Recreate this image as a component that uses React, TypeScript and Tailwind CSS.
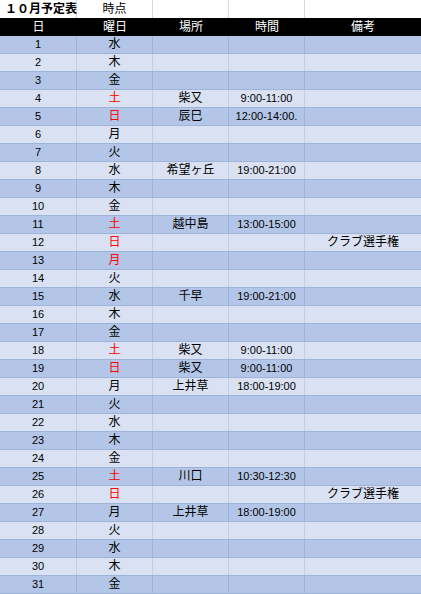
type Row = {
  day: number
  dow: string
  place?: string
  time?: string
  note?: string
  holiday?: boolean
}

const rows: Row[] = [
  {day: 1, dow: '水'},
  {day: 2, dow: '木'},
  {day: 3, dow: '金'},
  {day: 4, dow: '土', place: '柴又', time: '9:00-11:00'},
  {day: 5, dow: '日', place: '辰巳', time: '12:00-14:00.'},
  {day: 6, dow: '月'},
  {day: 7, dow: '火'},
  {day: 8, dow: '水', place: '希望ヶ丘', time: '19:00-21:00'},
  {day: 9, dow: '木'},
  {day: 10, dow: '金'},
  {day: 11, dow: '土', place: '越中島', time: '13:00-15:00'},
  {day: 12, dow: '日', note: 'クラブ選手権'},
  {day: 13, dow: '月', holiday: true},
  {day: 14, dow: '火'},
  {day: 15, dow: '水', place: '千早', time: '19:00-21:00'},
  {day: 16, dow: '木'},
  {day: 17, dow: '金'},
  {day: 18, dow: '土', place: '柴又', time: '9:00-11:00'},
  {day: 19, dow: '日', place: '柴又', time: '9:00-11:00'},
  {day: 20, dow: '月', place: '上井草', time: '18:00-19:00'},
  {day: 21, dow: '火'},
  {day: 22, dow: '水'},
  {day: 23, dow: '木'},
  {day: 24, dow: '金'},
  {day: 25, dow: '土', place: '川口', time: '10:30-12:30'},
  {day: 26, dow: '日', note: 'クラブ選手権'},
  {day: 27, dow: '月', place: '上井草', time: '18:00-19:00'},
  {day: 28, dow: '火'},
  {day: 29, dow: '水'},
  {day: 30, dow: '木'},
  {day: 31, dow: '金'},
]

const grid = 'grid grid-cols-[77px_76px_76px_76px_1fr] h-[18px]'
const font = {fontFamily: '"Liberation Sans", "Noto Sans CJK JP", sans-serif'}

export default function App() {
  return (
    <div className="w-[421px] h-[594px] overflow-hidden bg-white text-black" style={font}>
      <div className={`${grid} bg-white`}>
        <div className="border-r border-[#d9d9d9] pl-[5px] text-[12px] font-bold leading-[18px] whitespace-nowrap">
          １０月予定表
        </div>
        <div className="border-r border-[#d9d9d9] text-center text-[12px] leading-[18px]">時点</div>
        <div className="border-r border-[#d9d9d9]" />
        <div className="border-r border-[#d9d9d9]" />
        <div />
      </div>
      <div className={`${grid} bg-black text-white text-[12px] leading-[18px] text-center`}>
        <div>日</div>
        <div>曜日</div>
        <div>場所</div>
        <div>時間</div>
        <div>備考</div>
      </div>
      {rows.map((r) => {
        const dark = r.day % 2 === 1
        const line = dark ? 'border-[#9fb2d8]' : 'border-[#c3cce0]'
        const red = r.dow === '土' || r.dow === '日' || r.holiday
        return (
          <div
            key={r.day}
            className={`${grid} border-b border-[#9fb2d8] leading-[17px] text-center ${
              dark ? 'bg-[#b4c6e7]' : 'bg-[#d9e1f2]'
            }`}
          >
            <div className={`border-r ${line} text-[11px]`}>{r.day}</div>
            <div className={`border-r ${line} text-[12px] ${red ? 'text-[#ff0000]' : ''}`}>{r.dow}</div>
            <div className={`border-r ${line} text-[12px]`}>{r.place}</div>
            <div className={`border-r ${line} text-[11px]`}>{r.time}</div>
            <div className="text-[12px]">{r.note}</div>
          </div>
        )
      })}
    </div>
  )
}
